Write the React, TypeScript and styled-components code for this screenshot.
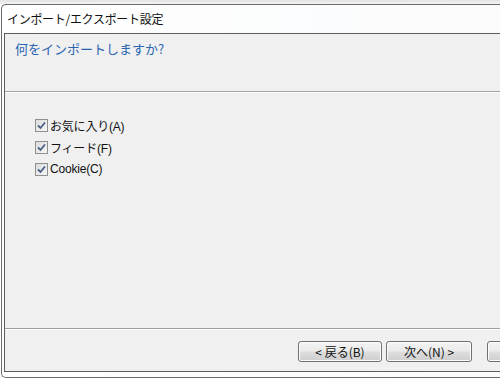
import React from "react";
import styled, { createGlobalStyle } from "styled-components";

const Global = createGlobalStyle`
  html, body { margin: 0; padding: 0; background: #ffffff; }
  body { font-family: "Liberation Sans", "Noto Sans CJK JP", sans-serif; }
  #root { width: 500px; height: 380px; overflow: hidden; position: relative; }
`;

const Page = styled.div`
  width: 500px;
  height: 380px;
  overflow: hidden;
  background: linear-gradient(#e2e2e2, #f4f4f4 4px, #ffffff 4px);
  padding-top: 4px;
  padding-left: 1px;
  box-sizing: border-box;
`;

const Window = styled.div`
  width: 560px;
  height: 374px;
  box-sizing: border-box;
  border: 1px solid #6a6a6a;
  border-right: none;
  border-radius: 5px 0 0 5px;
  background: linear-gradient(90deg, #ffffff, #fbfcfd 60%, #fdfbfb);
  display: flex;
  flex-direction: column;
  padding: 0 0 5px 2px;
`;

const TitleBar = styled.div`
  height: 28px;
  flex: none;
  padding: 7px 0 0 3px;
  box-sizing: border-box;
  font-family: "Noto Sans CJK JP", sans-serif;
  font-size: 12px;
  line-height: 14px;
  color: #111;
  letter-spacing: -0.3px;
`;

const Panel = styled.div`
  flex: 1;
  display: flex;
  flex-direction: column;
  border: 1px solid #5c5c5c;
  border-right: none;
  background: #f0f0f0;
`;

const Header = styled.div`
  height: 58px;
  flex: none;
  box-sizing: border-box;
  padding: 7px 0 0 10px;
  font-family: "Noto Sans CJK JP", sans-serif;
  font-size: 13px;
  line-height: 16px;
  color: #2a66b0;
  border-bottom: 1px solid #a0a0a0;
`;

const Separator = styled.div`
  height: 1px;
  flex: none;
  background: #ffffff;
`;

const Content = styled.div`
  flex: 1;
  padding: 25px 0 0 30px;
  display: flex;
  flex-direction: column;
  border-bottom: 1px solid #a0a0a0;
`;

const Row = styled.label`
  display: flex;
  align-items: center;
  height: 22px;
  margin-top: -4px;
  margin-bottom: 4px;
  gap: 2px;
  font-family: "Liberation Sans", "Noto Sans CJK JP", sans-serif;
  font-size: 12px;
  color: #111;
  letter-spacing: -0.2px;
`;

const Box = styled.span`
  width: 13px;
  height: 13px;
  box-sizing: border-box;
  border: 1px solid #8f8f8f;
  background: linear-gradient(135deg, #dcdcdc, #f6f6f6);
  display: flex;
  align-items: center;
  justify-content: center;
  flex: none;
`;

const Footer = styled.div`
  height: 41px;
  flex: none;
  box-sizing: border-box;
  padding: 11px 0 0 293px;
  display: flex;
  align-items: flex-start;
`;

const Button = styled.button<{ $w: number; $gap: number }>`
  width: ${(p) => p.$w}px;
  height: 21px;
  margin-left: ${(p) => p.$gap}px;
  flex: none;
  box-sizing: border-box;
  border: 1px solid #707070;
  border-radius: 3px;
  background: linear-gradient(#f3f3f3, #ebebeb 48%, #dddddd 52%, #cfcfcf);
  box-shadow: inset 0 0 0 1px #fcfcfc;
  font-family: "Noto Sans CJK JP", sans-serif;
  font-size: 12px;
  line-height: 17px;
  color: #111;
  padding: 0;
  white-space: nowrap;
  overflow: hidden;
`;

const Check = () => (
  <svg width="9" height="9" viewBox="0 0 9 9">
    <path d="M1 4.5 L3.5 7 L8 1.5" fill="none" stroke="#4a5f84" strokeWidth="1.8" />
  </svg>
);

const items = ["お気に入り(A)", "フィード(F)", "Cookie(C)"];

export default function App() {
  return (
    <>
      <Global />
      <Page>
        <Window>
          <TitleBar>インポート/エクスポート設定</TitleBar>
          <Panel>
            <Header>何をインポートしますか?</Header>
            <Separator />
            <Content>
              {items.map((t) => (
                <Row key={t}>
                  <Box>
                    <Check />
                  </Box>
                  {t}
                </Row>
              ))}
            </Content>
            <Separator />
            <Footer>
              <Button $w={84} $gap={0}>&lt; 戻る(B)</Button>
              <Button $w={86} $gap={4}>次へ(N) &gt;</Button>
              <Button $w={95} $gap={15}>キャンセル</Button>
            </Footer>
          </Panel>
        </Window>
      </Page>
    </>
  );
}
